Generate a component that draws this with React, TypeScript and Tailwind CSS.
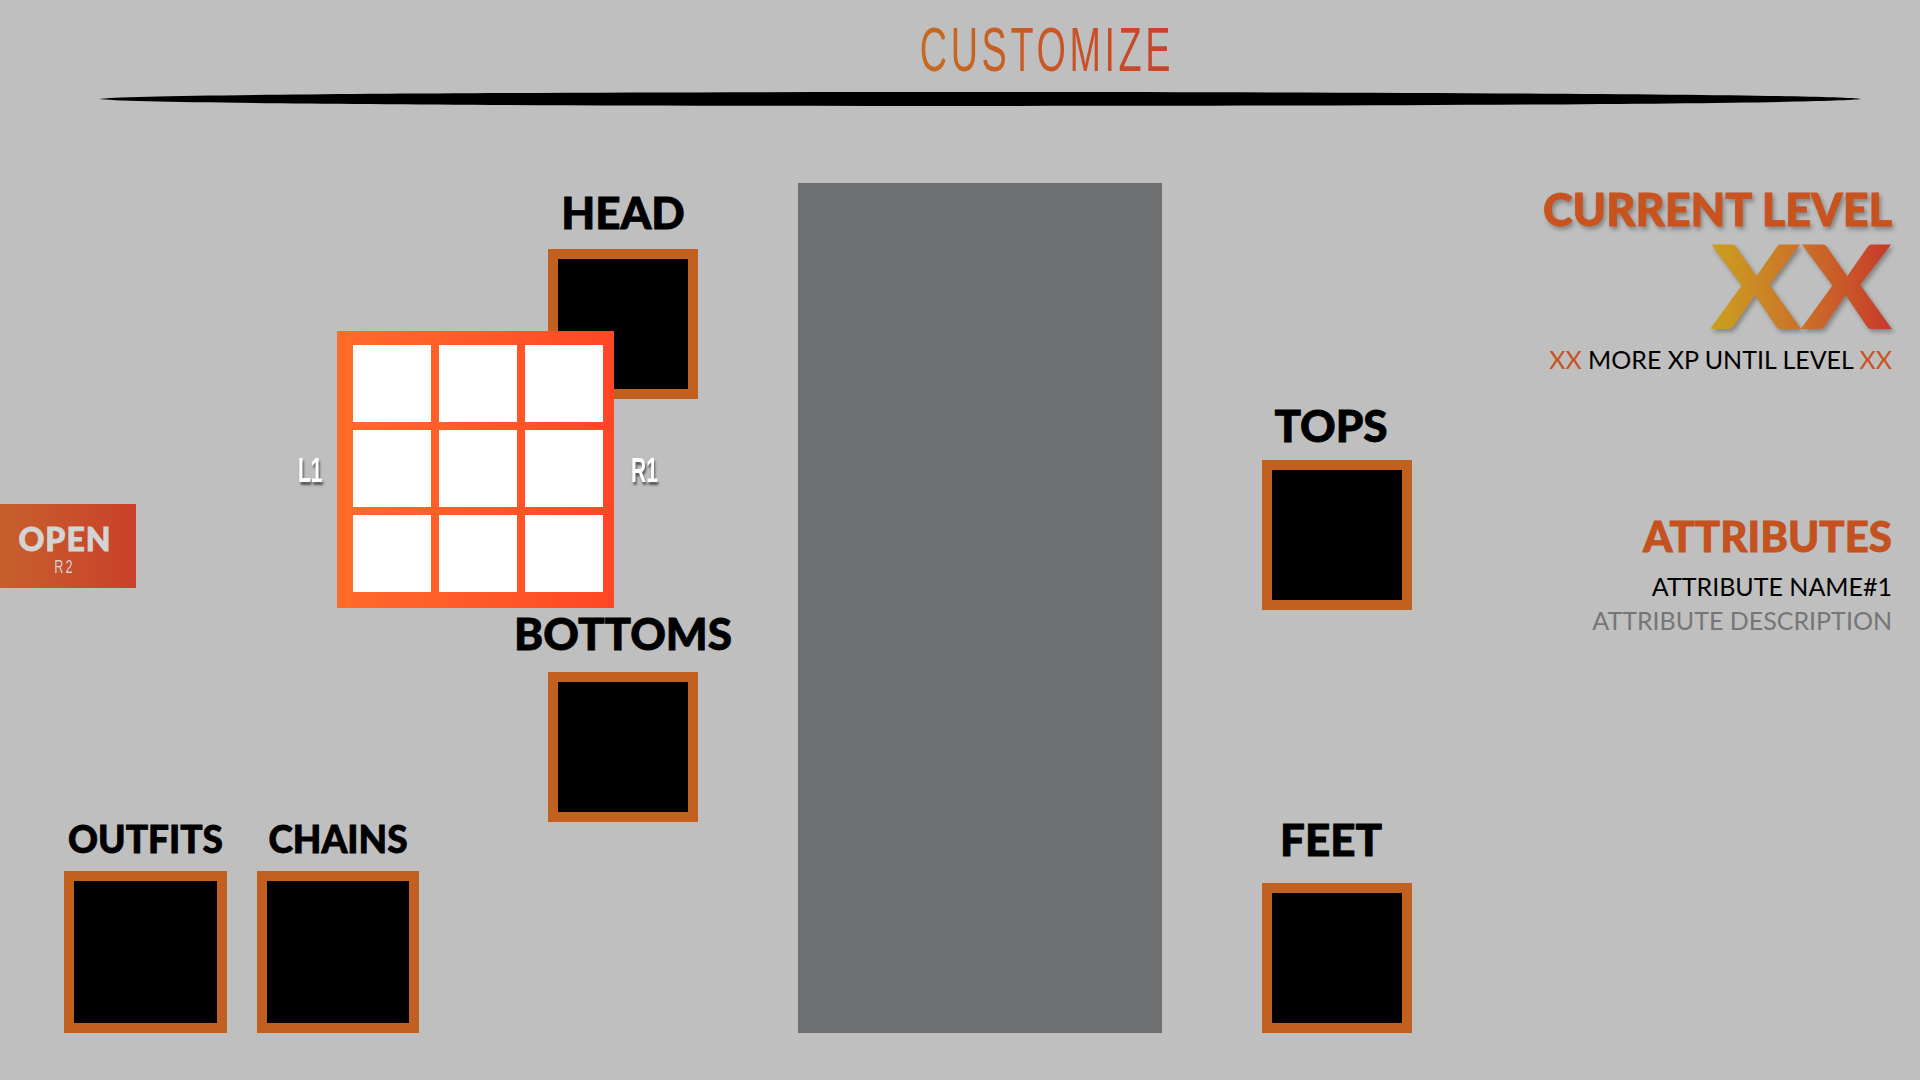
const slotBox = "border-[10px] border-[#c1601f] bg-black"
const narrow = "font-['Liberation_Sans',Arial,sans-serif]"
const heavy = "[-webkit-text-stroke:0.8px_currentColor]"

type SlotProps = {
  label: string
  labelClass: string
  boxClass: string
}

const Slot = ({ label, labelClass, boxClass }: SlotProps) => {
  return (
    <div className="flex flex-col items-center">
      <h3 className={`whitespace-nowrap font-black leading-none text-black ${heavy} ${labelClass}`}>{label}</h3>
      <div className={`${slotBox} ${boxClass}`} />
    </div>
  )
}

const TitleLine = () => (
  <svg className="mt-[8px] block" width={1920} height={20} viewBox="0 0 1920 20">
    <path d="M99 10 C160 0.7 1800 0.7 1861 10 C1800 19.3 160 19.3 99 10 Z" fill="#000" />
  </svg>
)

const InventoryGrid = () => (
  <div className="absolute left-[290px] top-[148px] flex items-center">
    <span className={`w-[40px] text-center text-[35px] font-bold leading-none text-white ${narrow} scale-x-[0.6] [text-shadow:2px_3px_3px_rgba(0,0,0,0.55)]`}>L1</span>
    <div className="ml-[7px] grid h-[277px] w-[277px] grid-cols-3 gap-[8px] bg-linear-to-r from-[#ff6b2b] to-[#ff4626] pb-[16px] pl-[16px] pr-[11px] pt-[14px]">
      {Array.from({ length: 9 }).map((_, i) => (
        <div key={i} className="bg-white" />
      ))}
    </div>
    <span className={`ml-[9px] w-[40px] text-center text-[35px] font-bold leading-none text-white ${narrow} scale-x-[0.6] [text-shadow:2px_3px_3px_rgba(0,0,0,0.55)]`}>R1</span>
  </div>
)

export default function App() {
  return (
    <main className="flex h-[1080px] w-[1920px] flex-col overflow-hidden bg-[#bfbfbf] font-[Lato,'Noto_Sans',sans-serif]">
      <header className="flex h-[183px] flex-col">
        <div className="flex justify-center pl-[174px] pt-[18px]">
          <h1 className={`inline-block scale-x-[0.6] bg-linear-to-r from-[#c66b1f] to-[#c9402a] bg-clip-text text-[63px] leading-none tracking-[6px] text-transparent ${narrow}`}>
            CUSTOMIZE
          </h1>
        </div>
        <TitleLine />
      </header>

      <section className="flex h-[850px]">
        {/* left side: slots + grid */}
        <div className="relative flex w-[798px]">
          <div className="flex h-full w-[548px] flex-col justify-end">
            <div className="flex items-end gap-[30px] pl-[64px]">
              <Slot label="OUTFITS" labelClass="text-[37px]" boxClass="mt-[14px] h-[162px] w-[163px]" />
              <Slot label="CHAINS" labelClass="text-[37px]" boxClass="mt-[14px] h-[162px] w-[162px]" />
            </div>
          </div>
          <div className="flex w-[150px] flex-col items-center">
            <Slot label="HEAD" labelClass="mt-[7px] text-[44px]" boxClass="mt-[15px] size-[150px]" />
            <Slot label="BOTTOMS" labelClass="mt-[212px] text-[44px]" boxClass="mt-[17px] size-[150px]" />
          </div>

          <button className="absolute left-0 top-[321px] flex h-[84px] w-[136px] flex-col items-center bg-linear-to-r from-[#c75f2b] to-[#c9402b] pr-[6px] pt-[19px]">
            <span className={`text-[32px] font-black leading-none tracking-[1px] text-[#d4d4d4] ${heavy}`}>OPEN</span>
            <span className={`mt-[3px] inline-block scale-x-[0.7] text-[18px] leading-none tracking-[3px] text-[#d4d4d4] ${narrow}`}>R2</span>
          </button>

          <InventoryGrid />
        </div>

        {/* character preview */}
        <div className="h-full w-[364px] bg-[#6f7072]" />

        <div className="ml-[100px] flex w-[150px] flex-col items-center">
          <Slot label="TOPS" labelClass="mr-[12px] mt-[220px] text-[44px]" boxClass="mt-[13px] size-[150px]" />
          <Slot label="FEET" labelClass="mr-[12px] mt-[207px] text-[44px]" boxClass="mt-[22px] size-[150px]" />
        </div>

        {/* level + attributes */}
        <div className="flex flex-1 flex-col items-end pr-[28px] text-right">
          <h2 className={`mt-[4px] text-[45px] font-black leading-none text-[#c8531f] drop-shadow-[2px_3px_2px_rgba(0,0,0,0.3)] ${heavy}`}>CURRENT LEVEL</h2>
          <p className="mt-[7px] origin-right scale-x-[1.15] bg-linear-to-r from-[#caa01e] to-[#c6362a] bg-clip-text text-[116px] font-black leading-[0.8] text-transparent drop-shadow-[2px_3px_2px_rgba(0,0,0,0.3)]">
            XX
          </p>
          <p className="mt-[15px] text-[25px] leading-none text-black">
            <span className="text-[#c8531f]">XX</span> MORE XP UNTIL LEVEL <span className="text-[#c8531f]">XX</span>
          </p>

          <h2 className={`mt-[143px] text-[42px] font-black leading-none text-[#c4521e] ${heavy}`}>ATTRIBUTES</h2>
          <p className="mt-[17px] text-[25px] leading-none text-black">ATTRIBUTE NAME#1</p>
          <p className="mt-[9px] text-[25px] leading-none text-[#767676]">ATTRIBUTE DESCRIPTION</p>
        </div>
      </section>
    </main>
  )
}
